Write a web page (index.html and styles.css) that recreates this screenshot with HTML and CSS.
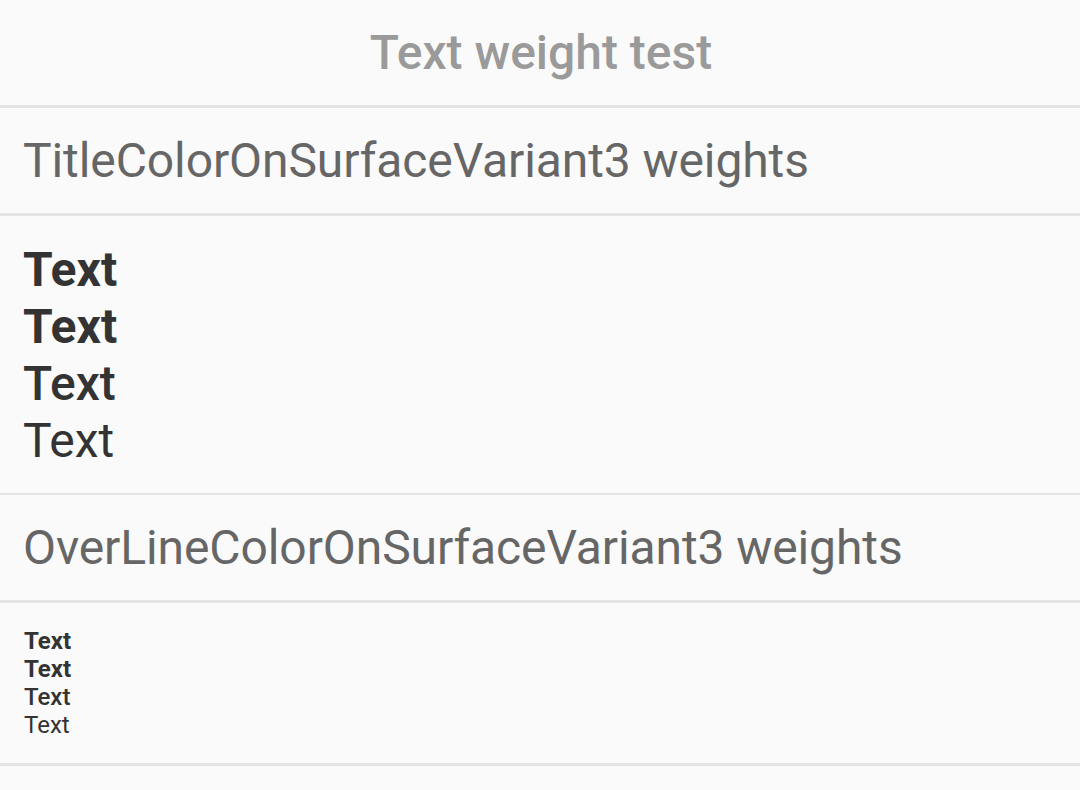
FILE: index.html
```html
<!DOCTYPE html>
<html>
<head>
<meta charset="utf-8">
<title>Text weight test</title>
<link rel="stylesheet" href="styles.css">
</head>
<body>
<div class="app">
  <header class="bar">Text weight test</header>
  <div class="divider"></div>
  <div class="row-title">TitleColorOnSurfaceVariant3 weights</div>
  <div class="divider"></div>
  <div class="block block-large">
    <div class="w-black">Text</div>
    <div class="w-bold">Text</div>
    <div class="w-medium">Text</div>
    <div class="w-regular">Text</div>
  </div>
  <div class="divider"></div>
  <div class="row-title">OverLineColorOnSurfaceVariant3 weights</div>
  <div class="divider"></div>
  <div class="block block-small">
    <div class="w-black">Text</div>
    <div class="w-bold">Text</div>
    <div class="w-medium">Text</div>
    <div class="w-regular">Text</div>
  </div>
  <div class="divider"></div>
</div>
</body>
</html>
```
FILE: styles.css
```css
html, body {
  margin: 0;
  padding: 0;
  background: #fafafa;
}
body {
  font-family: Roboto, "Noto Sans", sans-serif;
  width: 1080px;
  height: 790px;
  overflow: hidden;
}
.app {
  display: flex;
  flex-direction: column;
}
.bar {
  height: 105px;
  display: flex;
  align-items: center;
  justify-content: center;
  font-size: 48px;
  font-weight: 500;
  color: #9a9a9a;
  padding-left: 2px;
}
.divider {
  height: 2.75px;
  background: #e4e4e4;
}
.row-title {
  height: 105px;
  display: flex;
  align-items: center;
  padding-left: 23px;
  font-size: 48px;
  font-weight: 400;
  letter-spacing: -0.1px;
  color: #666666;
}
.block {
  display: flex;
  flex-direction: column;
  padding-left: 23px;
  color: #333333;
}
.block-large {
  font-size: 48px;
  line-height: 57px;
  padding-top: 25px;
  padding-bottom: 24px;
}
.block-small {
  font-size: 24px;
  line-height: 28px;
  padding-top: 24px;
  padding-bottom: 24px;
  padding-left: 24px;
}
.w-black { font-weight: 700; }
.w-bold { font-weight: 700; }
.w-medium { font-weight: 500; }
.w-regular { font-weight: 400; }
```
